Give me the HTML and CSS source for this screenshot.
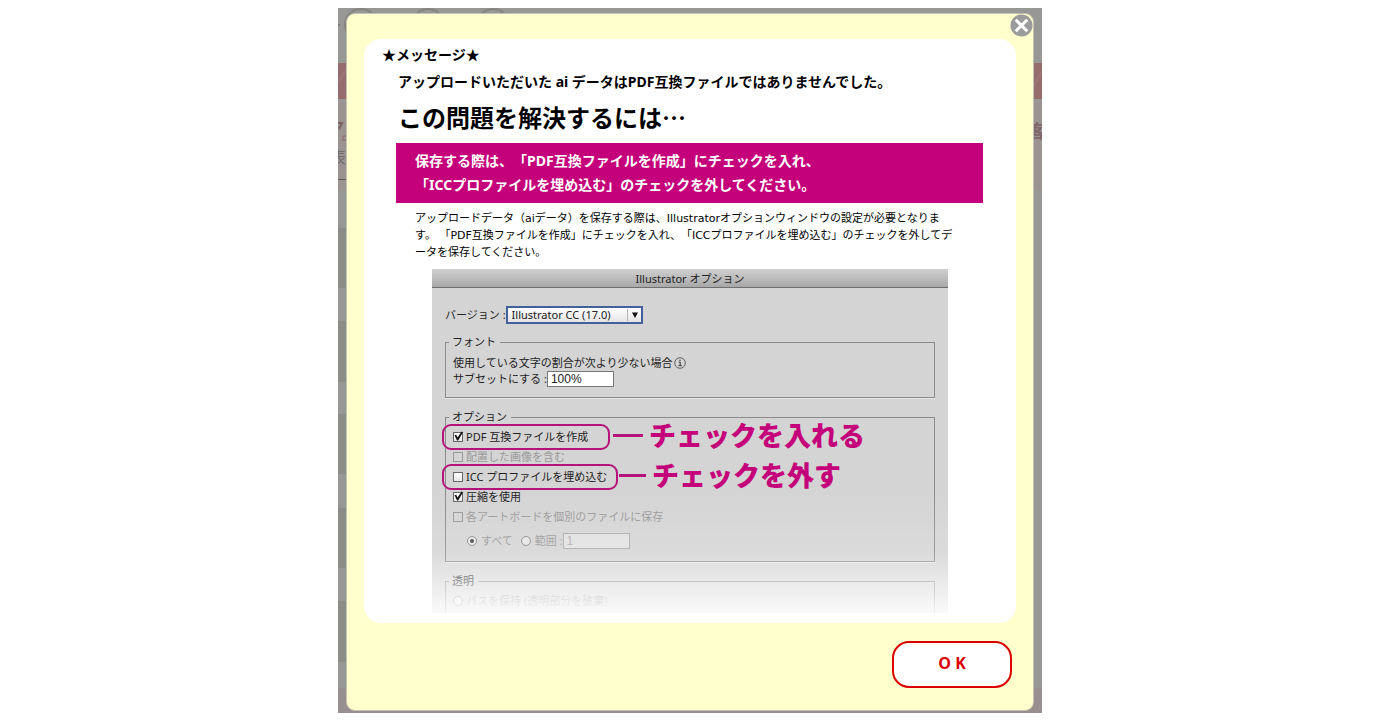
FILE: index.html
```html
<!DOCTYPE html>
<html lang="ja">
<head>
<meta charset="utf-8">
<meta name="viewport" content="width=device-width, initial-scale=1">
<title>メッセージ</title>
<link rel="stylesheet" href="styles.css">
</head>
<body>
<div class="frame">
  <svg class="backdrop" viewBox="0 0 704 705" preserveAspectRatio="none" aria-hidden="true">
    <rect y="92" width="704" height="90" fill="#9a9392"/>
    <rect y="55" width="704" height="36" fill="#966c6d"/>
    <path d="M0 75L12 55M692 85L704 63" stroke="#9b7374" stroke-width="3"/>
    <g fill="none" stroke="#858480" stroke-width="2">
      <circle cx="23" cy="17" r="16"/><circle cx="90" cy="17" r="16"/><circle cx="155" cy="17" r="16"/>
      <circle cx="-8" cy="437" r="14" stroke="#686764"/>
    </g>
    <circle cx="1" cy="17" r="1" fill="#77716f"/>
    <g fill="#8c8d88"><rect y="220" width="12" height="60"/><rect y="313" width="12" height="61"/><rect y="406" width="12" height="60"/><rect y="500" width="12" height="60"/><rect y="593" width="12" height="61"/></g>
    <path d="M0 115H4L1 121" stroke="#7f6061" stroke-width="2" fill="none"/>
    <rect x="5" y="128" width="5" height="4" fill="none" stroke="#8c6869"/>
    <text class="backdrop-dark" x="-8" y="155">表</text>
    <text class="backdrop-red" x="690" y="130">客</text>
    <path d="M0 171.500H9" stroke="#5d5c5b"/>
    <path d="M0 680H704V705H0Z" fill="#978f90"/>
  </svg>

  <main class="dialog" role="dialog" aria-label="メッセージ">
    <button class="close" type="button" aria-label="閉じる">
      <svg viewBox="0 0 24 24" aria-hidden="true"><circle cx="12" cy="12" r="11.500" fill="#9b9b9b"/><path d="M6 6L18 18M18 6L6 18" stroke="#fff" stroke-width="3.200"/></svg>
    </button>

    <section class="message">
      <p class="message-title">★メッセージ★</p>
      <div class="message-body">
        <p class="message-lead">アップロードいただいた ai データはPDF互換ファイルではありませんでした。</p>
        <h1 class="message-heading">この問題を解決するには…</h1>
        <p class="banner">保存する際は、「PDF互換ファイルを作成」にチェックを入れ、<br>「ICCプロファイルを埋め込む」のチェックを外してください。</p>
        <p class="description">アップロードデータ（aiデータ）を保存する際は、Illustratorオプションウィンドウの設定が必要となりま<br>す。 「PDF互換ファイルを作成」にチェックを入れ、「ICCプロファイルを埋め込む」のチェックを外してデ<br>ータを保存してください。</p>

        <div class="panel">
          <div class="panel-title">Illustrator オプション</div>
          <div class="panel-content">
            <div class="row version">
              <label for="version">バージョン :</label>
              <span class="picker">
                <select id="version" class="select"><option>Illustrator CC (17.0)</option></select>
                <svg class="picker-arrow" viewBox="0 0 16 14" aria-hidden="true"><path d="M.5 1V13" stroke="#b5b5b5"/><path d="M5 4.500H11L8 10Z" fill="#111"/></svg>
              </span>
            </div>

            <fieldset class="group group-font">
              <legend class="legend">フォント</legend>
              <div class="row info-row">
                <span>使用している文字の割合が次より少ない場合</span>
                <svg class="info" viewBox="0 0 12 12" aria-hidden="true"><circle cx="6" cy="6" r="5.300" fill="none" stroke="#555" stroke-width=".9"/><path d="M4.800 5H6.200V8.500M4.500 8.700H7.800" fill="none" stroke="#333"/><circle cx="6" cy="3.200" r=".7" fill="#333"/></svg>
              </div>
              <div class="row">
                <label for="subset">サブセットにする :</label>
                <input id="subset" class="field" type="text" value="100%">
              </div>
            </fieldset>

            <fieldset class="group group-options">
              <legend class="legend">オプション</legend>
              <div class="option">
                <label class="choice marked marked-pdf"><input class="check" type="checkbox" checked><span>PDF 互換ファイルを作成</span></label>
                <strong class="callout callout-on">チェックを入れる</strong>
              </div>
              <div class="option">
                <label class="choice disabled"><input class="check" type="checkbox" disabled><span>配置した画像を含む</span></label>
              </div>
              <div class="option">
                <label class="choice marked marked-icc"><input class="check" type="checkbox"><span>ICC プロファイルを埋め込む</span></label>
                <strong class="callout">チェックを外す</strong>
              </div>
              <div class="option">
                <label class="choice"><input class="check" type="checkbox" checked><span>圧縮を使用</span></label>
              </div>
              <div class="option">
                <label class="choice disabled"><input class="check" type="checkbox" disabled><span>各アートボードを個別のファイルに保存</span></label>
              </div>
              <div class="option artboards disabled">
                <label class="choice"><input class="radio" type="radio" name="artboards" checked disabled><span>すべて</span></label>
                <label class="choice"><input class="radio" type="radio" name="artboards" disabled><span>範囲 :</span></label>
                <input class="field field-disabled" type="text" value="1" aria-label="範囲" disabled>
              </div>
            </fieldset>

            <fieldset class="group group-alpha">
              <legend class="legend">透明</legend>
              <div class="option">
                <label class="choice disabled"><input class="radio" type="radio" name="alpha" disabled><span>パスを保持 (透明部分を破棄)</span></label>
              </div>
            </fieldset>
          </div>
        </div>
      </div>
    </section>

    <div class="actions">
      <button class="ok" type="button">O K</button>
    </div>
  </main>
</div>
</body>
</html>
```

FILE: styles.css
```css
* {
  box-sizing: border-box;
}

body {
  margin: 0;
  padding: 8px 16px 0;
  background: #fff;
  color: #000;
  font-family: "Noto Sans", "Noto Sans CJK JP", sans-serif;
  text-spacing-trim: space-all;
}

p, h1 {
  margin: 0;
}

.frame {
  position: relative;
  max-width: 704px;
  margin: 0 auto;
  padding: 5px 8px 2px;
  overflow: hidden;
  background: #979795;
}

.backdrop {
  position: absolute;
  inset: 0;
  width: 100%;
  height: 100%;
}

.backdrop-dark {
  fill: #6c6b6a;
  font-size: 16px;
}

.backdrop-red {
  fill: #806668;
  font-size: 18px;
  font-weight: 700;
}

.dialog {
  position: relative;
  padding: 25px 17px 22px;
  border: 1px solid #c3c3b4;
  border-radius: 9px;
  background: #ffffce;
}

.close {
  position: absolute;
  top: 0;
  right: 0;
  width: 23px;
  height: 23px;
  padding: 0;
  border: 0;
  background: none;
}

.close svg {
  display: block;
}

.message {
  padding: 6px 0 10px 18px;
  border-radius: 17px;
  background: #fff;
}

.message-title,
.message-lead {
  font-size: 14px;
  font-weight: 700;
  line-height: 20px;
}

.message-body {
  padding: 7px 33px 0 14px;
}

.message-lead,
.message-heading {
  padding-left: 2px;
}

.message-heading {
  margin-top: 10px;
  font-family: "Noto Sans CJK JP", sans-serif;
  font-size: 24px;
  font-weight: 700;
  line-height: 30px;
}

.banner {
  margin-top: 11px;
  padding: 6px 19px;
  background: #c4007a;
  color: #fff;
  font-size: 14px;
  font-weight: 700;
  line-height: 24px;
}

.description {
  margin-top: 7px;
  padding: 0 10px 0 19px;
  font-family: "DejaVu Sans", "Noto Sans CJK JP", sans-serif;
  font-size: 11px;
  line-height: 17px;
}

.panel {
  position: relative;
  margin: 8px 35px 0 36px;
  overflow: hidden;
  background: #d4d4d4;
  color: #222;
  font-size: 11px;
  line-height: 16px;
}

.panel::after {
  content: "";
  position: absolute;
  inset: 220px 0 0;
  background: linear-gradient(rgba(255, 255, 255, 0), rgba(255, 255, 255, .15) 50%, rgba(255, 255, 255, .5) 74%, rgba(255, 255, 255, .88));
  pointer-events: none;
}

.panel-title {
  height: 19px;
  border-bottom: 1px solid #6e6e6e;
  background: linear-gradient(#d0d0d0, #a8a8a8);
  line-height: 19px;
  text-align: center;
}

.panel-content {
  padding: 18px 13px 0;
}

.row,
.option,
.choice {
  display: flex;
  align-items: center;
}

.picker {
  position: relative;
  width: 137px;
}

.select {
  display: block;
  width: 100%;
  height: 18px;
  padding: 0 0 0 4px;
  border: 2px solid #43609a;
  border-radius: 0;
  appearance: none;
  background: linear-gradient(#fff, #e4e4e4);
  color: #222;
  font: 11px/14px "Noto Sans", sans-serif;
}

.picker-arrow {
  position: absolute;
  top: 2px;
  right: 0;
  width: 16px;
  height: 14px;
  pointer-events: none;
}

.group {
  min-width: 0;
  margin: 11px 0 0;
  padding: 0 7px;
  border: 1px solid #8b8b8b;
  box-shadow: 0 1px 0 #e6e6e6;
}

.group-font {
  margin-top: 10px;
  padding: 5px 7px 10px;
}

.group-options {
  padding: 2px 7px 10px;
}

.group-alpha {
  padding: 2px 7px;
  border-bottom: 0;
}

.legend {
  margin-left: -4px;
  padding: 0 4px 0 3px;
  line-height: 16px;
}

.info-row {
  gap: 2px;
}

.info {
  width: 12px;
  height: 12px;
}

.field {
  width: 67px;
  height: 16px;
  padding: 0 3px;
  border: 1px solid #777;
  background: #fff;
  color: #222;
  font: 12px/14px "Liberation Sans", sans-serif;
}

.field-disabled {
  border-color: #aaa;
  background: #e1e1e1;
  color: #b0b0b0;
}

.option {
  height: 20px;
}

.choice {
  position: relative;
  gap: 3px;
  white-space: nowrap;
}

.disabled {
  color: #999;
}

.check,
.radio {
  position: relative;
  flex: none;
  width: 10px;
  height: 10px;
  margin: 0;
  border: 1px solid #666;
  appearance: none;
  background: linear-gradient(#fff, #e8e8e8);
}

.radio {
  border-radius: 50%;
}

.check:disabled {
  border-color: #999;
  background: none;
}

.radio:disabled {
  border-color: #888;
  background: #e5e5e5;
}

.check:checked::before {
  content: "";
  position: absolute;
  inset: -2px -1px 0 0;
  background: #111;
  clip-path: polygon(6% 43%, 24% 37%, 40% 65%, 84% 4%, 100% 12%, 46% 95%, 34% 95%);
}

.radio:checked::before {
  content: "";
  position: absolute;
  inset: 2px;
  border-radius: 50%;
  background: #444;
}

.marked::before {
  content: "";
  position: absolute;
  inset: -5px auto -5px -11px;
  border: 2px solid #b5137b;
  border-radius: 9px;
}

.marked-pdf {
  flex: 0 0 160px;
}

.marked-pdf::before {
  width: 164px;
}

.marked-icc {
  flex: 0 0 166px;
}

.marked-icc::before {
  width: 172px;
}

.callout {
  display: flex;
  align-items: center;
  gap: 6px;
  padding-bottom: 4px;
  color: #c4007a;
  font-family: "Noto Sans CJK JP", sans-serif;
  font-size: 27px;
  font-weight: 900;
  line-height: 20px;
  white-space: nowrap;
}

.callout::before {
  content: "";
  width: 27px;
  height: 3px;
  background: #b5137b;
}

.callout-on::before {
  width: 30px;
}

.artboards {
  gap: 8px;
  margin-top: 4px;
  padding-left: 14px;
}

.artboards .choice {
  gap: 4px;
}

.artboards .field {
  margin-left: -8px;
}

.actions {
  display: flex;
  justify-content: flex-end;
  padding: 18px 4px 0 0;
}

.ok {
  width: 120px;
  height: 47px;
  padding: 0 0 3px;
  border: 2px solid #dc0000;
  border-radius: 17px;
  background: #fff;
  color: #dc0000;
  font: 700 16px/20px "Open Sans", sans-serif;
}
```
